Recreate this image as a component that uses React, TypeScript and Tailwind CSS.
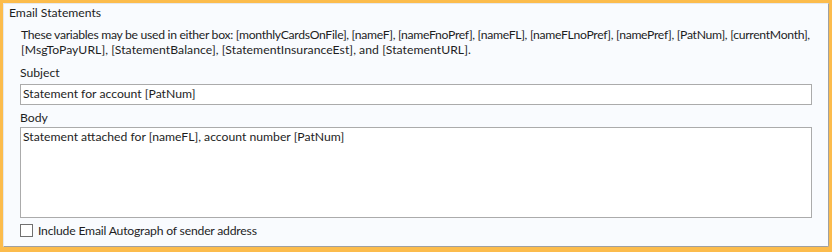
export default function App() {
  return (
    <div className="w-[832px] h-[252px] bg-[#fcbc4c] pt-[3px] pl-[3px] pr-[3px] font-['Lato',sans-serif] text-[12.2px] text-[#1e1e1e]">
      <div className="h-[244px] bg-[#f9fbfe] border border-[#e6e8ec] border-r-[#a0a0a0] border-b-[#a0a0a0] rounded-br-[2px]">
        <div className="pl-[5px] pt-[1px] leading-[16px]">Email Statements</div>
        <div className="pl-[17px] pr-[4px] pt-[6px] leading-[15px] whitespace-nowrap">
          <div className="tracking-[-0.3px]">
            These variables may be used in either box: [monthlyCardsOnFile], [nameF], [nameFnoPref], [nameFL], [nameFLnoPref], [namePref], [PatNum], [currentMonth],
          </div>
          <div className="tracking-[0.05px]">
            [MsgToPayURL], [StatementBalance], [StatementInsuranceEst], and [StatementURL].
          </div>
        </div>
        <div className="pl-[16px] pr-[16px]">
          <div className="mt-[8px] leading-[15px]">Subject</div>
          <div className="mt-[4px] h-[21px] bg-white border border-[#ababab] px-[2px] leading-[18px]">
            Statement for account [PatNum]
          </div>
          <div className="mt-[5px] leading-[15px]">Body</div>
          <div className="mt-[2px] h-[91px] bg-white border border-[#ababab] px-[2px] leading-[18px]">
            Statement attached for [nameFL], account number [PatNum]
          </div>
          <label className="mt-[5px] flex items-center gap-[5px] leading-[15px] tracking-[-0.2px]">
            <span className="w-[13px] h-[13px] bg-white border border-[#707070]" />
            Include Email Autograph of sender address
          </label>
        </div>
      </div>
    </div>
  );
}
